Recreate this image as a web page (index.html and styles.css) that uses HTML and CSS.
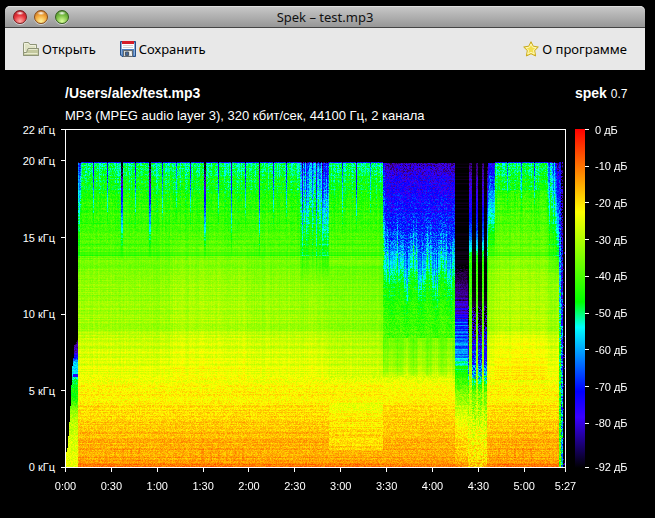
FILE: index.html
```html
<!DOCTYPE html>
<html lang="ru">
<head>
<meta charset="utf-8">
<title>Spek – test.mp3</title>
<link rel="stylesheet" href="styles.css">
</head>
<body>
<div class="window">
  <header class="titlebar">
    <div class="lights">
      <button class="light light-close" type="button" aria-label="Закрыть"></button>
      <button class="light light-minimize" type="button" aria-label="Свернуть"></button>
      <button class="light light-zoom" type="button" aria-label="Развернуть"></button>
    </div>
    <h1 class="title">Spek – test.mp3</h1>
  </header>

  <nav class="toolbar">
    <button class="tool" type="button">
      <svg class="icon" viewBox="0 0 16 16" aria-hidden="true">
        <path d="M.5 14.5V2.5Q.5 1.5 1.500 1.500H5.500L7 3.500H13.500V7.500H15.500V14.500Z" fill="#cfd2ad" stroke="#8e9478"/>
        <path d="M1.500 13V2.500H5L6.500 4.500H12.500V7.500H4.500V10.500H1.500" fill="#dfe2c4" stroke="#f0f1de"/>
        <path d="M.5 11.500H3.500L5 7.500H15.500V14.500H.5Z" fill="#c3c89e" stroke="#8e9478"/>
        <path d="M5.500 8.500H14.500M1.500 12.500H14.500" stroke="#e8ebcf"/>
      </svg>
      <span>Открыть</span>
    </button>
    <button class="tool" type="button">
      <svg class="icon" viewBox="0 0 16 16" aria-hidden="true">
        <path d="M.5.5H15.500V15.500H2L.5 14Z" fill="#4f7fbd" stroke="#254f88"/>
        <path d="M1.500 1.500V13.500M14.500 2V14.500" stroke="#86abd8"/>
        <path d="M2 0H14V8H2Z" fill="#fff"/>
        <path d="M2 0H14V3H2Z" fill="#d51d28"/>
        <path d="M3 4.500H13M3 6.500H13" stroke="#d4d4d4"/>
        <path d="M3.500 9.500H12.500V15.500H3.500Z" fill="#d8dad8" stroke="#646b70"/>
        <path d="M5.500 11H8.500V14.500H5.500Z" fill="#42669a" stroke="#4d5966"/>
        <path d="M10 10.500L11.500 14.500" stroke="#fff"/>
      </svg>
      <span>Сохранить</span>
    </button>
    <button class="tool tool-about" type="button">
      <svg class="icon" viewBox="0 0 16 16" aria-hidden="true">
        <path d="M8 .7L10.200 5.200L15.300 6L11.700 9.600L12.600 15L8 12.700L3.400 15L4.300 9.600L.7 6L5.800 5.200Z" fill="#f5e35a" stroke="#c9a91e" stroke-linejoin="round"/>
        <path d="M8 3L9.600 6.200L13 6.700L10.500 9.200L11.200 13L8 11.300L4.800 13L5.500 9.200L3 6.700L6.400 6.200Z" fill="#f3df4e" stroke="#fff8b8" stroke-linejoin="round"/>
      </svg>
      <span>О программе</span>
    </button>
  </nav>

  <main class="chart">
    <div class="file">
      <h2 class="path">/Users/alex/test.mp3</h2>
      <p class="format">MP3 (MPEG audio layer 3), 320 кбит/сек, 44100 Гц, 2 канала</p>
    </div>
    <p class="brand"><strong>spek</strong> <span class="version">0.7</span></p>

    <ol class="axis frequency">
      <li>22 кГц</li><li>20 кГц</li><li>15 кГц</li><li>10 кГц</li><li>5 кГц</li><li>0 кГц</li>
    </ol>
    <div class="plot"><canvas class="spectrogram" width="499" height="337" role="img" aria-label="Спектрограмма"></canvas></div>
    <div class="density">
      <div class="ramp"></div>
      <ol class="axis level">
        <li>0 дБ</li><li>-10 дБ</li><li>-20 дБ</li><li>-30 дБ</li><li>-40 дБ</li><li>-50 дБ</li><li>-60 дБ</li><li>-70 дБ</li><li>-80 дБ</li><li>-92 дБ</li>
      </ol>
    </div>
    <ol class="time">
      <li>0:00</li><li>0:30</li><li>1:00</li><li>1:30</li><li>2:00</li><li>2:30</li><li>3:00</li><li>3:30</li><li>4:00</li><li>4:30</li><li>5:00</li><li>5:27</li>
    </ol>
  </main>
</div>
<script src="spectrogram.js"></script>
</body>
</html>
```
FILE: styles.css
```css
* { box-sizing: border-box; }

body {
  margin: 0;
  background: #000;
  color: #fff;
  font-family: "Liberation Sans", Arial, sans-serif;
  font-size: 11px;
  line-height: 16px;
}

h1, h2, p, ol { margin: 0; padding: 0; font: inherit; list-style: none; }

.window {
  display: flex;
  flex-direction: column;
  min-height: 100vh;
  padding: 6px 10px 0 5px;
}

.titlebar {
  display: grid;
  grid-template-columns: 1fr auto 1fr;
  align-items: center;
  height: 22px;
  padding: 0 8px;
  border-bottom: 1px solid #444;
  border-radius: 5px 5px 0 0;
  background: linear-gradient(#c9c9c9, #979797);
  box-shadow: inset 0 1px #dedede;
  color: #111;
  font-family: "Noto Sans", "Open Sans", sans-serif;
  font-size: 13px;
}

.lights { display: flex; gap: 7px; }

.light {
  width: 14px;
  height: 14px;
  padding: 0;
  border: 1px solid;
  border-radius: 50%;
  box-shadow: 0 1px #d0d0d0;
}

.light-close {
  border-color: #7c1c20;
  background: radial-gradient(ellipse 4px 2px at 50% 18%, #fff, transparent), radial-gradient(circle at 50% 85%, #ffb0a8, #e8373e 50%, #a41720);
}

.light-minimize {
  border-color: #8a4d18;
  background: radial-gradient(ellipse 4px 2px at 50% 18%, #fff, transparent), radial-gradient(circle at 50% 85%, #fff39a, #f3a83c 50%, #b2601c);
}

.light-zoom {
  border-color: #35601d;
  background: radial-gradient(ellipse 4px 2px at 50% 18%, #fff, transparent), radial-gradient(circle at 50% 85%, #dcff9c, #7cc045 50%, #3c7a20);
}

.toolbar {
  display: flex;
  align-items: center;
  gap: 24px;
  height: 42px;
  padding: 0 18px;
  background: #e8e8e8;
}

.tool {
  display: flex;
  align-items: center;
  gap: 3px;
  padding: 0;
  border: 0;
  background: none;
  color: #000;
  font-family: "Noto Sans", "Open Sans", sans-serif;
  font-size: 13px;
  line-height: 16px;
}

.tool-about { margin-left: auto; }

.icon { width: 16px; height: 16px; }

.chart {
  flex: 1;
  display: grid;
  grid-template-columns: 60px minmax(0, 1fr) 79px;
  grid-template-rows: 59px minmax(0, 1fr) 50px;
}

.file {
  grid-column: 2;
  display: flex;
  flex-direction: column;
  justify-content: flex-end;
  gap: 7px;
  padding-bottom: 5px;
  white-space: nowrap;
}

.path { font-size: 14px; font-weight: bold; }
.format { font-size: 13px; }

.brand { padding: 15px 0 0 9px; font-size: 14px; }
.version { font-size: 12px; }

.axis li {
  display: flex;
  align-items: center;
  height: 1px;
  gap: 6px;
  white-space: nowrap;
}

.axis li::before,
.axis li::after { width: 4px; height: 1px; background: #fff; }

.frequency {
  display: grid;
  grid-template-rows: 205fr 500fr 500fr 500fr 500fr 1px;
}

.frequency li { justify-content: flex-end; }
.frequency li::after { content: ""; }

.plot { border: 1px solid #fff; }

.spectrogram { display: block; width: 100%; height: 100%; }

.density { display: flex; padding-left: 9px; }

.ramp {
  width: 10px;
  background: linear-gradient(#f00, #ff0 24.500%, #0f0 51%, #0ff 58.500%, #00f 77.400%, #3900ff 85%, #000);
}

.level {
  display: grid;
  grid-template-rows: repeat(8, 10fr) 12fr 1px;
}

.level li::before { content: ""; }

.time {
  grid-column: 2;
  display: grid;
  grid-template-columns: repeat(10, 30fr) 27fr 1px;
}

.time li {
  display: flex;
  flex-direction: column;
  align-items: center;
  width: 1px;
  gap: 6px;
}

.time li::before {
  content: "";
  width: 1px;
  height: 4px;
  background: #fff;
}
```
FILE: spectrogram.js
```js
(function () {
  const canvas = document.querySelector(".spectrogram");
  const ctx = canvas.getContext("2d");
  const W = canvas.width, H = canvas.height;
  const image = ctx.createImageData(W, H);

  let seed = 7;
  function rnd() {
    seed = (seed * 1664525 + 1013904223) >>> 0;
    return seed / 4294967296;
  }
  const noise = n => Array.from({ length: n }, () => rnd() - 0.5);
  const rowNoise = noise(H), colNoise = noise(W), colNoise2 = noise(W);

  // Depth of each regular vertical drop, one per beat.
  const BEATS = [.16, .22, .2, .42, .18, .42, .12, .14, .22, .42, .2, .32, .22, .36, .24, .2, .2, .2];

  // Maps a level in 0..1 to the density palette.
  function colour(v) {
    const l = Math.max(0, Math.min(1, v)) * 0.6625;
    let r = 0, g = 0, b = 0;
    if (l < 0.15) { r = (0.15 - l) / 0.225; b = 1; }
    else if (l < 0.275) { g = (l - 0.15) / 0.125; b = 1; }
    else if (l < 0.325) { g = 1; b = (0.325 - l) / 0.05; }
    else if (l < 0.5) { r = (l - 0.325) / 0.175; g = 1; }
    else { r = 1; g = (0.6625 - l) / 0.1625; }
    const k = l < 0.1 ? l / 0.1 : 1;
    return [r * k * 255, g * k * 255, b * k * 255];
  }

  // Linear interpolation over [row, level] pairs.
  function curve(points, y) {
    if (y <= points[0][0]) return points[0][1];
    for (let i = 1; i < points.length; i++) {
      if (y <= points[i][0]) {
        const [y0, v0] = points[i - 1], [y1, v1] = points[i];
        return v0 + (v1 - v0) * (y - y0) / (y1 - y0);
      }
    }
    return points[points.length - 1][1];
  }

  const LOUD = [[32, .46], [48, .495], [66, .525], [90, .56], [120, .58], [140, .63], [165, .65], [200, .66], [204, .69], [235, .72], [250, .735], [253, .755], [268, .765], [280, .785], [300, .815], [320, .835], [332, .85], [334, .88], [336, .89]];
  const SOFT = [[32, .10], [50, .17], [75, .21], [105, .27], [128, .36], [145, .46], [165, .52], [185, .54], [206, .57]];
  const SOFT_LOW = [[208, .60], [240, .655], [246, .70], [252, .745], [268, .765], [285, .80], [300, .81], [320, .835], [332, .85], [336, .89]];
  const QUIET = [[130, 0], [150, .05], [170, .1], [188, .17], [192, .27], [225, .33], [236, .47], [250, .55], [268, .65], [282, .70], [298, .77], [330, .82], [336, .87]];
  const GAP = [[155, 0], [190, .05], [210, .17], [235, .27], [250, .45], [262, .60], [282, .66], [300, .73], [336, .80]];
  const BEAM = [[32, .06], [70, .17], [105, .30], [118, .42], [130, .53], [190, .59], [240, .65], [290, .72], [310, .76], [336, .81]];
  const EDGE = [[0, 322], [1, 318], [2, 306], [3, 292], [4, 276], [5, 255], [6, 236], [7, 228], [8, 215], [12, 208]];

  function level(x, y) {
    if (x < 12) {
      if (y < curve(EDGE, x)) return 0;
      if (x > 6 && y > 243 && y < 247) return .18;
      return curve([[208, .03], [222, .13], [228, .25], [232, .39], [246, .40], [250, .48], [270, .53], [282, .66], [310, .72], [336, .73]], y) + (rnd() - .5) * .08;
    }
    if (y < 32) return 0;
    if (x > 496) return y > 120 && rnd() < .06 ? .12 : 0;
    if (x > 492) {
      const v = curve([[32, .1], [100, .2], [200, .38], [336, .5]], y);
      return x > 494 ? v - .25 + rnd() * .3 : v + rnd() * .18;
    }

    const rows = rowNoise[y], cols = colNoise[x];
    const grain = rnd() - .5;
    const fade = bottom => Math.max(0, 1 - (y - 32) / (bottom - 32));
    const top = fade(132);
    const low = Math.max(0, Math.min(1, (y - 245) / 20));
    let v;

    if (x >= 389 && x < 402) {
      v = curve(QUIET, y) + rows * (y > 165 && y < 240 ? .12 : .03) + grain * (y < 135 ? 0 : .05);
    } else if (x >= 402 && x < 421) {
      const beam = [403, 404, 405, 410, 411, 416, 417].includes(x);
      v = curve(beam ? BEAM : GAP, y) + grain * (beam ? .07 : y > 175 && y < 250 ? .24 : y > 175 ? .10 : 0) + rows * .03;
    } else if (x >= 317 && x < 389) {
      if (y < 208) {
        const shift = cols * 36 + Math.sin(x * .43) * 12;
        const weight = Math.min(1, (y - 32) / 70);
        v = curve(SOFT, Math.max(32, y - shift * weight));
        v += grain * (y < 125 ? .15 : .08) + cols * .03 + rows * .04;
      } else {
        v = curve(SOFT_LOW, y) + (y < 246 ? Math.sin(x * .43) * .025 + cols * .035 : 0) + grain * .035 + rows * .035;
      }
      if (x < 319 && y < 130) v += .08;
    } else {
      v = curve(LOUD, y) + grain * (.035 + .06 * top) + rows * .045 + cols * (low ? .01 : .03);
      v -= Math.max(0, colNoise2[x]) * .12 * top;
      if (x < 14) v -= .16 * fade(150);
      const n = Math.floor((x - 27) / 13.78) + 1;
      const beat = (x - 27) - (n - 1) * 13.78;
      if (n >= 0 && x < 234 && beat < (BEATS[n] > .4 ? 2 : 1)) v -= (BEATS[n] + rnd() * .12) * fade(BEATS[n] > .3 ? 130 : 100);
      if (x >= 234 && x < 263) {
        const strong = Math.max(0, colNoise2[x] + (x > 252 ? .55 : .3));
        v -= (strong * .36 + rnd() * .12) * fade(155);
        v -= .02 * fade(230);
      }
      if (x >= 421 && x < 429) v -= (.22 + rnd() * .1) * fade(125);
      if (x === 421) v -= .18 * fade(260);
      if (x >= 483) v -= (.12 + (x > 488 ? .1 : 0) + cols * .3 + rnd() * .1) * fade(150);
      if (x > 429 && x < 483 && beat < 1) v -= (.14 + rnd() * .1) * fade(90);
      if (x === 290 || x === 276 || x === 304) v -= ((x === 290 ? .3 : .12) + rnd() * .1) * fade(105);
      if (x >= 263 && x < 317 && y > 272 && y < 320) v -= rows > .05 ? .06 : .01;
      if (x >= 263 && x < 317 && y > 135 && y < 250) v -= .022;
      if (x >= 429 && x < 480 && y > 60 && y < 250) v += .02;
      if (x > 105 && x < 180 && y > 110 && y < 250) v += .012;
      if (x >= 421 && y > 204 && y < 250) v += .015;
      if (y > 317 && y < 331 && ((x > 44 && x < 75) || (x > 128 && x < 178) || (x > 426 && x < 468)) && x % 8 < 2) v += .022;
      // Bands that the encoder attenuates.
      if (y > 121 && y < 126) v -= .055 + grain * .04;
      if (y > 112 && y < 116) v -= .02;
      if (y > 91 && y < 94) v -= .03;
    }
    if (low) v += grain * .035;
    if ((y === 143 || y === 165 || y === 195) && x < 389) v -= .03;
    if ([208, 222, 229, 238].includes(y) && x < 389) v += .022;
    if (y === 32) v -= .2;
    return v;
  }

  for (let y = 0; y < H; y++) {
    for (let x = 0; x < W; x++) {
      const [r, g, b] = colour(level(x, y));
      const i = (y * W + x) * 4;
      image.data[i] = r;
      image.data[i + 1] = g;
      image.data[i + 2] = b;
      image.data[i + 3] = 255;
    }
  }
  ctx.putImageData(image, 0, 0);
})();
```
